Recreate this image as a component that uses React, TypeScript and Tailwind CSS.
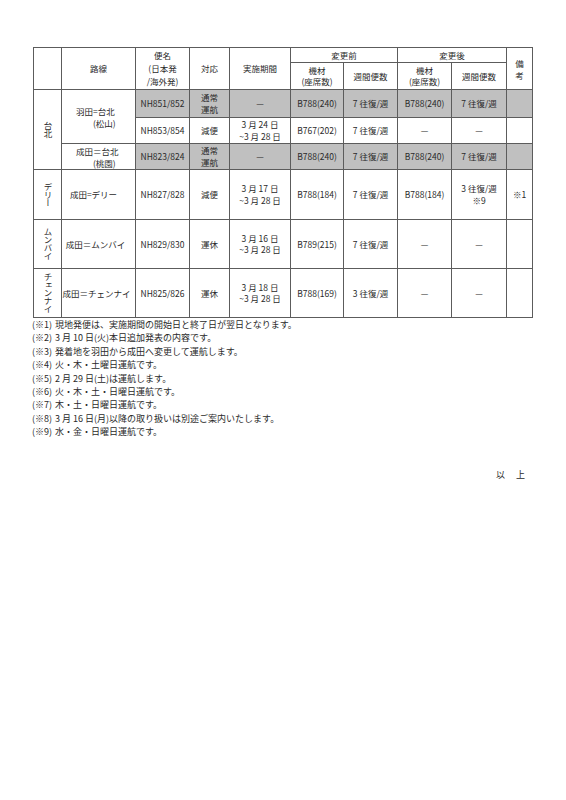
import React from 'react'

const font = { fontFamily: '"Noto Sans CJK JP", "Noto Sans", sans-serif' }

const td = 'border border-[#5c5c5c] text-center align-middle p-0'
const gray = 'bg-[#c0c0c0]'

function Vert({ text }: { text: string }) {
  return (
    <div className="flex justify-center">
      <span className="[writing-mode:vertical-rl] leading-[9px] text-[8.5px] tracking-[-0.5px]">{text}</span>
    </div>
  )
}

function Two({ a, b }: { a: string; b: string }) {
  return (
    <div className="leading-[11.5px]">
      <div>{a}</div>
      <div>{b}</div>
    </div>
  )
}

function Route({ a, b }: { a: string; b: string }) {
  return (
    <div className="text-left leading-[12px]">
      <div className="pl-[14px]">{a}</div>
      <div className="pl-[31px]">{b}</div>
    </div>
  )
}

const notes = [
  ['(※1)', '現地発便は、実施期間の開始日と終了日が翌日となります。'],
  ['(※2)', '3 月 10 日(火)本日追加発表の内容です。'],
  ['(※3)', '発着地を羽田から成田へ変更して運航します。'],
  ['(※4)', '火・木・土曜日運航です。'],
  ['(※5)', '2 月 29 日(土)は運航します。'],
  ['(※6)', '火・木・土・日曜日運航です。'],
  ['(※7)', '木・土・日曜日運航です。'],
  ['(※8)', '3 月 16 日(月)以降の取り扱いは別途ご案内いたします。'],
  ['(※9)', '水・金・日曜日運航です。'],
]

export default function App() {
  return (
    <div className="w-[566px] h-[800px] bg-white text-[#2a2a2a]" style={font}>
      <div className="pt-[47px] pl-[33px]">
        <table className="table-fixed border-collapse w-[499px] text-[8.5px]">
          <colgroup>
            <col className="w-[28px]" />
            <col className="w-[74px]" />
            <col className="w-[54px]" />
            <col className="w-[40px]" />
            <col className="w-[61px]" />
            <col className="w-[53px]" />
            <col className="w-[54px]" />
            <col className="w-[54px]" />
            <col className="w-[55px]" />
            <col className="w-[26px]" />
          </colgroup>
          <tbody>
            <tr className="h-[15px]">
              <td className={td} rowSpan={2}></td>
              <td className={td} rowSpan={2}>路線</td>
              <td className={td} rowSpan={2}>
                <div className="leading-[13px]">
                  <div>便名</div>
                  <div>(日本発</div>
                  <div>/海外発)</div>
                </div>
              </td>
              <td className={td} rowSpan={2}>対応</td>
              <td className={td} rowSpan={2}>実施期間</td>
              <td className={td} colSpan={2}>変更前</td>
              <td className={td} colSpan={2}>変更後</td>
              <td className={td} rowSpan={2}>
                <div className="leading-[12px]">
                  <div>備</div>
                  <div>考</div>
                </div>
              </td>
            </tr>
            <tr className="h-[27px]">
              <td className={td}><Two a="機材" b="(座席数)" /></td>
              <td className={td}>週間便数</td>
              <td className={td}><Two a="機材" b="(座席数)" /></td>
              <td className={td}>週間便数</td>
            </tr>

            <tr className="h-[28px]">
              <td className={td} rowSpan={3}><Vert text="台北" /></td>
              <td className={td} rowSpan={2}><Route a="羽田=台北" b="(松山)" /></td>
              <td className={`${td} ${gray}`}>NH851/852</td>
              <td className={`${td} ${gray}`}><Two a="通常" b="運航" /></td>
              <td className={`${td} ${gray}`}>—</td>
              <td className={`${td} ${gray}`}>B788(240)</td>
              <td className={`${td} ${gray}`}>7 往復/週</td>
              <td className={`${td} ${gray}`}>B788(240)</td>
              <td className={`${td} ${gray}`}>7 往復/週</td>
              <td className={`${td} ${gray}`}></td>
            </tr>
            <tr className="h-[26px]">
              <td className={td}>NH853/854</td>
              <td className={td}>減便</td>
              <td className={td}><Two a="3 月 24 日" b="~3 月 28 日" /></td>
              <td className={td}>B767(202)</td>
              <td className={td}>7 往復/週</td>
              <td className={td}>—</td>
              <td className={td}>—</td>
              <td className={td}></td>
            </tr>
            <tr className="h-[26px]">
              <td className={td}><Route a="成田＝台北" b="(桃園)" /></td>
              <td className={`${td} ${gray}`}>NH823/824</td>
              <td className={`${td} ${gray}`}><Two a="通常" b="運航" /></td>
              <td className={`${td} ${gray}`}>—</td>
              <td className={`${td} ${gray}`}>B788(240)</td>
              <td className={`${td} ${gray}`}>7 往復/週</td>
              <td className={`${td} ${gray}`}>B788(240)</td>
              <td className={`${td} ${gray}`}>7 往復/週</td>
              <td className={`${td} ${gray}`}></td>
            </tr>

            <tr className="h-[50px]">
              <td className={td}><Vert text="デリー" /></td>
              <td className={td}><div className="pr-[10px]">成田=デリー</div></td>
              <td className={td}>NH827/828</td>
              <td className={td}>減便</td>
              <td className={td}><Two a="3 月 17 日" b="~3 月 28 日" /></td>
              <td className={td}>B788(184)</td>
              <td className={td}>7 往復/週</td>
              <td className={td}>B788(184)</td>
              <td className={td}><Two a="3 往復/週" b="※9" /></td>
              <td className={td}>※1</td>
            </tr>
            <tr className="h-[49px]">
              <td className={td}><Vert text="ムンバイ" /></td>
              <td className={td}><div className="pr-[6px]">成田＝ムンバイ</div></td>
              <td className={td}>NH829/830</td>
              <td className={td}>運休</td>
              <td className={td}><Two a="3 月 16 日" b="~3 月 28 日" /></td>
              <td className={td}>B789(215)</td>
              <td className={td}>7 往復/週</td>
              <td className={td}>—</td>
              <td className={td}>—</td>
              <td className={td}></td>
            </tr>
            <tr className="h-[49px]">
              <td className={td}><Vert text="チェンナイ" /></td>
              <td className={td}><div className="pr-[4px]">成田＝チェンナイ</div></td>
              <td className={td}>NH825/826</td>
              <td className={td}>運休</td>
              <td className={td}><Two a="3 月 18 日" b="~3 月 28 日" /></td>
              <td className={td}>B788(169)</td>
              <td className={td}>3 往復/週</td>
              <td className={td}>—</td>
              <td className={td}>—</td>
              <td className={td}></td>
            </tr>
          </tbody>
        </table>
      </div>

      <div className="pl-[32px] pt-[0px] text-[9px] leading-[13.4px]">
        {notes.map(([k, v]) => (
          <div key={k} className="flex">
            <span className="w-[23px] shrink-0">{k}</span>
            <span>{v}</span>
          </div>
        ))}
      </div>

      <div className="flex justify-end pr-[41px] pt-[29px] text-[9px]">
        <span className="tracking-[11px] mr-[-11px]">以上</span>
      </div>
    </div>
  )
}
